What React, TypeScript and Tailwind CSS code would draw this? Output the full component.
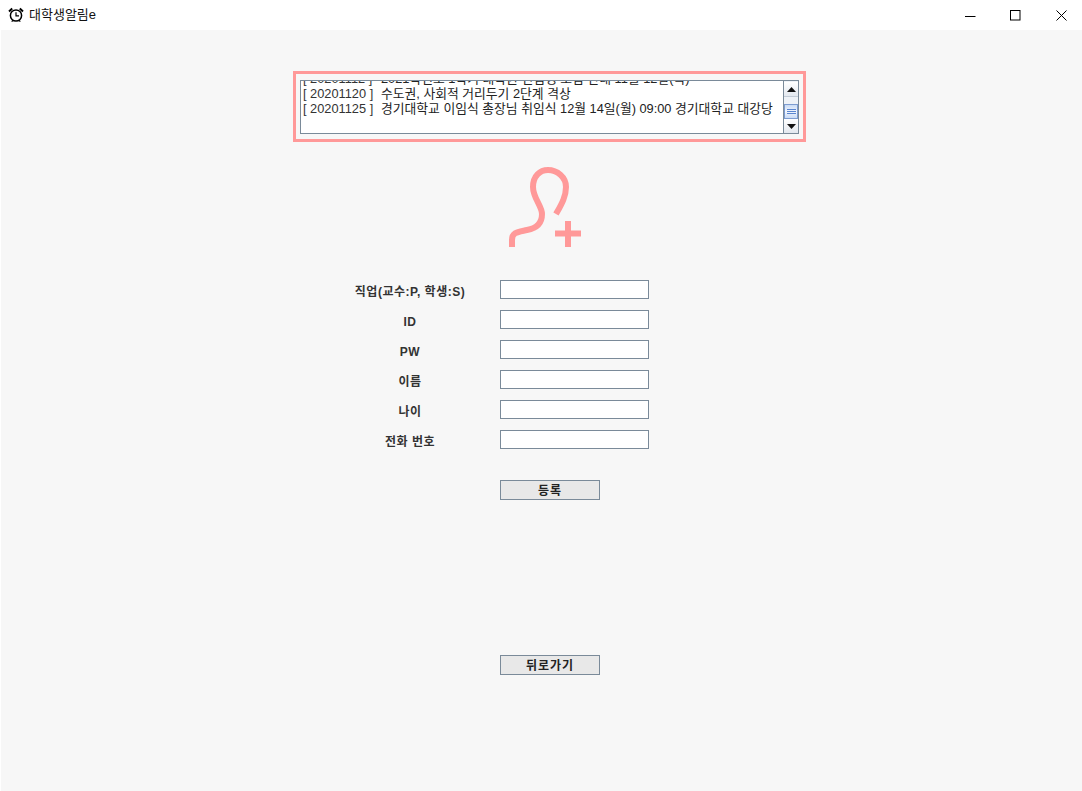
const font = { fontFamily: '"Liberation Sans", "Noto Sans CJK KR", sans-serif' };

const fields = ["직업(교수:P, 학생:S)", "ID", "PW", "이름", "나이", "전화 번호"];

function AlarmIcon() {
  return (
    <svg width="16" height="16" viewBox="0 0 16 16" fill="none" stroke="#000">
      <circle cx="8" cy="8.5" r="5.6" strokeWidth="1.5" />
      <path d="M8 5.2V8.8H11" strokeWidth="1.2" />
      <path d="M1 4.4 4.2 1.4M15 4.4 11.8 1.4" strokeWidth="2" />
      <path d="M3.8 14.8 4.8 13.2M12.2 14.8 11.2 13.2" strokeWidth="1.2" />
    </svg>
  );
}

function Row({ date, text, clip }: { date: string; text: string; clip?: boolean }) {
  return (
    <div className={clip ? "h-[15px] whitespace-nowrap leading-[15px] -mt-[10px]" : "h-[15px] whitespace-nowrap leading-[15px]"}>
      <span className="inline-block w-[80px] pl-[2px] text-[#333]">{date}</span>
      <span className="text-[#222]">{text}</span>
    </div>
  );
}

function ScrollBar() {
  return (
    <div className="w-[15px] shrink-0 flex flex-col bg-[#eef2f7] border-l border-[#7a8a99]">
      <div className="h-[15px] mt-[1px] flex items-center justify-center bg-gradient-to-b from-white to-[#e3e8ef] border-b border-[#c3ccd7]">
        <svg width="9" height="5" viewBox="0 0 9 5"><path d="M4.5 0 9 5H0Z" fill="#111" /></svg>
      </div>
      <div className="h-[7px]" />
      <div className="h-[15px] flex flex-col items-center justify-center gap-[1px] bg-gradient-to-b from-[#c9dbf5] via-[#f2f6fd] to-[#c9dbf5] border border-[#7d9cd0]">
        <div className="w-[9px] h-px bg-[#5a86d0]" />
        <div className="w-[9px] h-px bg-[#5a86d0]" />
        <div className="w-[9px] h-px bg-[#5a86d0]" />
      </div>
      <div className="h-[14px] flex items-center justify-center bg-gradient-to-b from-white to-[#e3e8ef]">
        <svg width="9" height="5" viewBox="0 0 9 5"><path d="M0 0H9L4.5 5Z" fill="#111" /></svg>
      </div>
    </div>
  );
}

function Button({ label, className }: { label: string; className: string }) {
  return (
    <button
      className={`block w-[100px] h-5 ml-[500px] pt-[1px] bg-[#e8e8e8] border border-[#7a8a99] text-[12px] font-bold tracking-[1px] text-[#222] leading-none ${className}`}
    >
      {label}
    </button>
  );
}

export default function App() {
  return (
    <div className="w-[1082px] h-[791px] overflow-hidden bg-[#f7f7f7] text-[12px] shadow-[inset_1px_0_0_#ffffff]" style={font}>
      <header className="h-[30px] bg-white flex items-center">
        <div className="ml-2 mr-[5px]"><AlarmIcon /></div>
        <span className="text-[13px] text-[#111]">대학생알림e</span>
        <div className="ml-auto flex items-center h-full">
          <div className="w-[41px] flex justify-center">
            <svg width="11" height="11" viewBox="0 0 11 11"><path d="M0 6.5H10.5" stroke="#000" /></svg>
          </div>
          <div className="w-[49px] flex justify-center">
            <svg width="11" height="11" viewBox="0 0 11 11"><rect x=".5" y=".5" width="9.5" height="9.5" fill="none" stroke="#000" /></svg>
          </div>
          <div className="w-[42px] flex justify-center">
            <svg width="11" height="11" viewBox="0 0 11 11"><path d="M.5.5 10.5 10.5M10.5.5 .5 10.5" stroke="#000" /></svg>
          </div>
        </div>
      </header>

      <div className="ml-[293px] mt-[41px] w-[513px] h-[71px] border-[3px] border-[#ff9999] px-1 pt-[6px]">
        <div className="h-[54px] flex border border-[#7a8a99] bg-white overflow-hidden">
          <div className="flex-1 min-w-0 overflow-hidden text-[12.8px]">
            <Row clip date="[ 20201112 ]" text="2021학년도 1학기 대학원 신입생 모집 안내 11월 12일(목)" />
            <Row date="[ 20201120 ]" text="수도권, 사회적 거리두기 2단계 격상" />
            <Row date="[ 20201125 ]" text="경기대학교 이임식 총장님 취임식 12월 14일(월) 09:00 경기대학교 대강당" />
          </div>
          <ScrollBar />
        </div>
      </div>

      <svg className="ml-[490px] mt-[13px] block" width="110" height="105" viewBox="490 155 110 105" fill="none" stroke="#ff9999">
        <path
          d="M512 247V240C512 232 518 232 527 230C538 228 542 222 542 214C542 206 533 198 533 187C533 176 540 170 548 170C557 170 566 177 566 187C566 197 561 205 556 214"
          strokeWidth="6"
        />
        <path d="M555 233.5H581M568 221V247" strokeWidth="6" />
      </svg>

      <div className="mt-[20px] flex flex-col gap-[11px]">
        {fields.map((f) => (
          <div key={f} className="flex items-center h-[19px]">
            <label className="ml-[340px] w-[140px] pt-[4px] text-center text-[12px] font-bold tracking-[0.5px] text-[#333] whitespace-nowrap">{f}</label>
            <input className="ml-5 w-[149px] h-[19px] bg-white border border-[#7a8a99] outline-none" />
          </div>
        ))}
      </div>

      <Button label="등록" className="mt-[31px]" />
      <Button label="뒤로가기" className="mt-[155px]" />
    </div>
  );
}
